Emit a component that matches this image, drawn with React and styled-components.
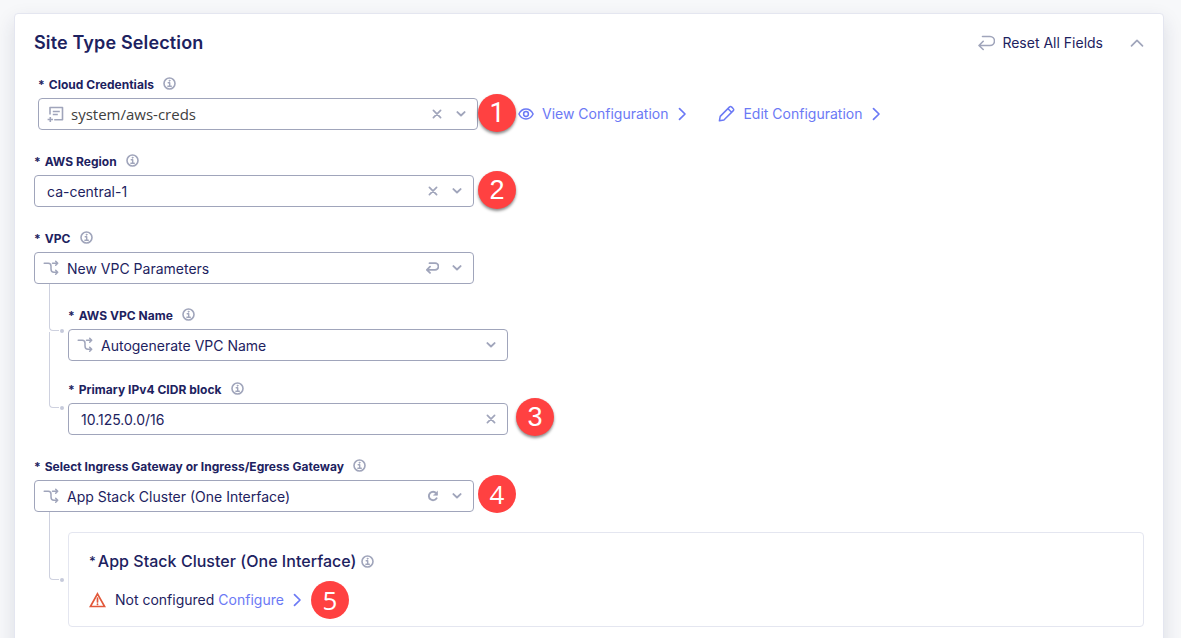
import React from "react";
import styled, { createGlobalStyle, css } from "styled-components";

const navy = "#1d2260";
const grey = "#a0a5bb";
const link = "#6b79f5";

const GlobalStyle = createGlobalStyle`
  * { box-sizing: border-box; }
  html, body { margin: 0; height: 638px; overflow: hidden; }
  body {
    background: #f7f8fa;
    color: ${navy};
    font-family: Inter, "Liberation Sans", sans-serif;
    font-size: 14px;
  }
  svg { display: block; flex: none; }
`;

const Page = styled.main`
  height: 638px;
  padding: 13px 17px 0 14px;
  overflow: hidden;
`;

const Card = styled.section`
  height: 680px;
  padding: 15px 19px 0;
  background: #fff;
  border: 1px solid #e4e6f0;
  border-radius: 4px;
  box-shadow: 0 8px 20px rgba(30, 40, 80, 0.13);
`;

const Header = styled.header`
  display: flex;
  align-items: center;
  height: 28px;
  margin-bottom: 19px;
`;

const Title = styled.h2`
  flex: 1;
  margin: 0;
  font-size: 18px;
  font-weight: 600;
  line-height: 28px;
  letter-spacing: 0.14px;
`;

const ResetButton = styled.button`
  display: flex;
  align-items: center;
  gap: 7px;
  margin-right: 27px;
  padding: 0;
  border: 0;
  background: none;
  color: ${navy};
  font: inherit;
  font-size: 14px;
  line-height: 28px;
`;

const Field = styled.div`
  width: 440px;
  margin-left: ${(p) => p.$indent || 0}px;
  margin-bottom: ${(p) => p.$gap ?? 23}px;
`;

const Label = styled.label`
  display: flex;
  align-items: center;
  gap: 9.5px;
  height: 16px;
  margin-bottom: 6px;
  font-size: 12px;
  font-weight: 700;
  letter-spacing: 0.025px;
  white-space: nowrap;

  & > svg {
    margin-top: -1px;
  }
`;

const LabelText = styled.span`
  display: flex;
  gap: 4px;
`;

const InputRow = styled.div`
  display: flex;
  align-items: center;
  height: 32px;
  white-space: nowrap;
`;

const Control = styled.div`
  flex: none;
  display: flex;
  align-items: center;
  gap: 7px;
  width: 440px;
  height: 32px;
  padding: 0 10px 0 ${(p) => (p.$plain ? 12 : 8)}px;
  border: 1px solid ${grey};
  border-radius: 4px;
  background: #fff;
`;

const Value = styled.span`
  flex: 1;
  padding-top: 1px;
  line-height: 20px;
  ${(p) =>
    p.$system &&
    css`
      padding: 0 0 1px;
      color: #404040;
      font-family: "Open Sans", "Noto Sans", sans-serif;
      font-size: 15px;
    `}
`;

const Actions = styled.span`
  display: flex;
  gap: 12px;
`;

const digitFonts = {
  narrow: "Roboto",
  humanist: '"Open Sans"',
  plain: '"Liberation Sans"',
};

const Marker = styled.span`
  flex: none;
  display: flex;
  align-items: center;
  justify-content: center;
  width: 38px;
  height: 38px;
  margin-left: ${(p) => p.$offset ?? 0}px;
  margin-top: ${(p) => p.$shift ?? -2}px;
  border-radius: 50%;
  background: #ff4141;
  color: #fff;
  font-family: ${(p) => digitFonts[p.$digit || "plain"]}, sans-serif;
  font-size: ${(p) => (p.$digit === "humanist" ? 26 : 27)}px;
  line-height: 38px;
  box-shadow: ${(p) => (p.$digit === "humanist" ? "none" : "0 2px 3px rgba(0, 0, 0, 0.45)")};
`;

const ConfigLink = styled.a`
  display: flex;
  align-items: center;
  gap: ${(p) => p.$gap ?? 8}px;
  margin-top: -1px;
  margin-left: ${(p) => p.$offset}px;
  color: ${link};
  font-size: 14px;
`;

const NestedRow = styled.div`
  display: grid;
  grid-template-columns: 34px 1fr;
  align-items: start;
`;

const Elbow = styled.div`
  position: relative;
  width: 10px;
  height: ${(p) => p.$height}px;
  margin: -${(p) => p.$rise}px 0 0 15px;
  border: solid #ced1df;
  border-width: 0 0 1px 1px;
  border-bottom-left-radius: 4px;

  &::after {
    content: "";
    position: absolute;
    right: -5px;
    bottom: -3px;
    width: 4px;
    height: 4px;
    border-radius: 50%;
    background: #c6cadb;
  }
`;

const Group = styled.section`
  height: 95px;
  margin-top: -3px;
  padding: 17px 20px 0;
  border: 1px solid #e4e6f0;
  border-radius: 4px;
`;

const GroupTitle = styled.h3`
  display: flex;
  align-items: center;
  gap: 4px;
  height: 22px;
  margin: 0;
  font-size: 16px;
  font-weight: 500;
  letter-spacing: 0.03px;
`;

const Star = styled.span`
  margin-right: -2px;
  font-size: 13px;
`;

const Status = styled.div`
  display: flex;
  align-items: center;
  height: 38px;
  margin-top: 9px;
  white-space: nowrap;
`;

const StatusText = styled.span`
  margin: -1px 0 0 9px;
`;

const Icon = ({ w = 16, h = w, box = `0 0 ${w} ${h}`, color = grey, sw = 1.3, children }) => (
  <svg width={w} height={h} viewBox={box} fill="none" stroke={color} strokeWidth={sw} strokeLinecap="round" strokeLinejoin="round">
    {children}
  </svg>
);

const Info = () => (
  <Icon w={13} sw={1.6}>
    <circle cx="6.5" cy="6.5" r="5.5" />
    <path d="M5.2 5.8h1.5v3.3M4.9 9.3h3.4" strokeWidth="1.4" />
    <circle cx="6.5" cy="3.7" r=".5" fill={grey} strokeWidth=".9" />
  </Icon>
);
const Clear = () => (
  <Icon w={12} sw={1.7}><path d="M2.4 2.4l7.2 7.2M9.6 2.4l-7.2 7.2" /></Icon>
);
const Down = () => (
  <Icon w={12} sw={1.9}><path d="M2.4 4.1L6 7.5l3.6-3.4" /></Icon>
);
const Up = () => (
  <Icon w={14} sw={1.7}><path d="M1.5 9.9L7 4.4l5.5 5.5" /></Icon>
);
const Next = () => (
  <Icon w={12} h={14} color={link} sw={1.7}><path d="M3.5 1.6L9 7l-5.5 5.4" /></Icon>
);
const Return = ({ small }) => (
  <Icon w={small ? 13 : 17} h={small ? 12 : 16} box="0 0 17 16" sw={small ? 2.4 : 1.6}>
    <path d="M4.5 1.5H12a4 4 0 0 1 0 9H1.2M5.2 6.3L1 10.5l4.2 4" />
  </Icon>
);
const Reload = () => (
  <Icon w={12} sw={1.9}>
    <path d="M9.6 8.3A4.2 4.2 0 1 1 9.2 3.2" />
    <path d="M10.5 1.6v3.6H6.9z" fill={grey} strokeWidth=".7" />
  </Icon>
);
const Branch = () => (
  <Icon w={17} h={16} sw={1.5}>
    <path d="M1.2 3.2h4.1c2.4 0 2.7 1 2.7 3v2.7c0 2.400.9 3.300 3 3.300h3.600M9.500 3.200h5.100M12.700 1.200l2 2-2 2M12.700 10.200l2 2-2 2" />
  </Icon>
);
const Credential = () => (
  <Icon w={17} h={17} sw={1.6}>
    <path d="M3 8.6V1.500h12.500v12.300H7.200M5.800 5.500h7M5.800 8.500h5M3.300 11v5M.6 13.500h5.400" strokeLinecap="butt" />
  </Icon>
);
const Eye = () => (
  <Icon w={16} h={14} color={link} sw={1.5}>
    <path d="M.9 7C2.500 3.800 5 2 8 2s5.500 1.800 7.100 5C13.500 10.200 11 12 8 12S2.500 10.200.9 7z" />
    <circle cx="8" cy="7" r="2.400" />
  </Icon>
);
const Pencil = () => (
  <Icon w={17} h={17} color={link} sw={1.5}>
    <path d="M1.400 15.800l.8-4.400L11.600 1.900a1.300 1.300 0 0 1 1.900 0l1.800 1.800a1.300 1.300 0 0 1 0 1.900L5.900 15zM10 3.700l3.600 3.600" />
  </Icon>
);
const Warning = () => (
  <Icon w={17} h={16} color="#e2583a" sw={1.700}>
    <path d="M8.500 1.800L15.600 14.500H1.400z" strokeLinejoin="miter" />
    <path d="M8.500 6.200v3.800M8.500 12v.4" />
  </Icon>
);

const FieldLabel = ({ children }) => (
  <Label>
    <LabelText><span>*</span><span>{children}</span></LabelText>
    <Info />
  </Label>
);

export default function App() {
  return (
    <>
      <GlobalStyle />
      <Page>
        <Card>
          <Header>
            <Title>Site Type Selection</Title>
            <ResetButton><Return />Reset All Fields</ResetButton>
            <Up />
          </Header>

          <Field $indent={4}>
            <FieldLabel>Cloud Credentials</FieldLabel>
            <InputRow>
              <Control>
                <Credential />
                <Value $system>system/aws-creds</Value>
                <Actions><Clear /><Down /></Actions>
              </Control>
              <Marker $digit="narrow">1</Marker>
              <ConfigLink $offset={2}><Eye />View Configuration <Next /></ConfigLink>
              <ConfigLink $offset={30}><Pencil />Edit Configuration <Next /></ConfigLink>
            </InputRow>
          </Field>

          <Field>
            <FieldLabel>AWS Region</FieldLabel>
            <InputRow>
              <Control $plain>
                <Value>ca-central-1</Value>
                <Actions><Clear /><Down /></Actions>
              </Control>
              <Marker $offset={4}>2</Marker>
            </InputRow>
          </Field>

          <Field>
            <FieldLabel>VPC</FieldLabel>
            <Control>
              <Branch />
              <Value>New VPC Parameters</Value>
              <Actions><Return small /><Down /></Actions>
            </Control>
          </Field>

          <NestedRow>
            <Elbow $height={47} $rise={23} />
            <Field $gap={20}>
              <FieldLabel>AWS VPC Name</FieldLabel>
              <Control>
                <Branch />
                <Value>Autogenerate VPC Name</Value>
                <Actions><Down /></Actions>
              </Control>
            </Field>
          </NestedRow>

          <NestedRow>
            <Elbow $height={76} $rise={49} />
            <Field>
              <FieldLabel>Primary IPv4 CIDR block</FieldLabel>
              <InputRow>
                <Control $plain>
                  <Value>10.125.0.0/16</Value>
                  <Actions><Clear /></Actions>
                </Control>
                <Marker $offset={8} $shift={-4}>3</Marker>
              </InputRow>
            </Field>
          </NestedRow>

          <Field>
            <FieldLabel>Select Ingress Gateway or Ingress/Egress Gateway</FieldLabel>
            <InputRow>
              <Control>
                <Branch />
                <Value>App Stack Cluster (One Interface)</Value>
                <Actions><Reload /><Down /></Actions>
              </Control>
              <Marker $digit="humanist" $offset={4} $shift={-4}>4</Marker>
            </InputRow>
          </Field>

          <NestedRow>
            <Elbow $height={68} $rise={23} />
            <Group>
              <GroupTitle><Star>*</Star>App Stack Cluster (One Interface)<Info /></GroupTitle>
              <Status>
                <Warning />
                <StatusText>Not configured</StatusText>
                <ConfigLink $offset={4} $gap={7}>Configure <Next /></ConfigLink>
                <Marker $digit="humanist" $offset={8} $shift={0}>5</Marker>
              </Status>
            </Group>
          </NestedRow>
        </Card>
      </Page>
    </>
  );
}
